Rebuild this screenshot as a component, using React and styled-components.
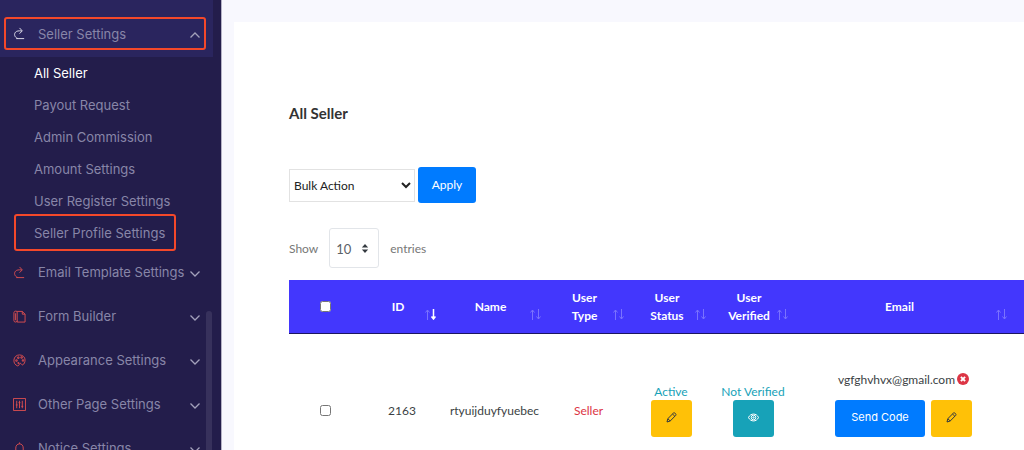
import React from "react";
import styled, { createGlobalStyle } from "styled-components";

const GlobalStyle = createGlobalStyle`
  * {
    box-sizing: border-box;
  }
  body {
    margin: 0;
    background: #f8f8fe;
    color: #3b3f44;
    font-family: Lato, sans-serif;
    font-size: 12px;
  }
`;

const settings = [
  { label: "Email Template Settings", icon: "reload" },
  { label: "Form Builder", icon: "files" },
  { label: "Appearance Settings", icon: "palette" },
  { label: "Other Page Settings", icon: "panel" },
  { label: "Notice Settings", icon: "bell" },
];

const sellerLinks = [
  { label: "All Seller", active: true },
  { label: "Payout Request" },
  { label: "Admin Commission" },
  { label: "Amount Settings" },
  { label: "User Register Settings" },
  { label: "Seller Profile Settings", marked: true },
];

const columns = [
  { label: "ID", width: 80, sorted: true },
  { label: "Name", width: 105 },
  { label: "User Type", width: 83 },
  { label: "User Status", width: 82 },
  { label: "User Verified", width: 82 },
  { label: "Email", width: 219 },
];

export default function App() {
  return (
    <Shell>
      <GlobalStyle />
      <Sidebar>
        <ActiveGroup>
          <GroupLink href="#seller" $marked>
            <MenuIcon name="reload" />
            <GroupLabel>Seller Settings</GroupLabel>
            <Chevron up />
          </GroupLink>
        </ActiveGroup>
        <SubMenu>
          {sellerLinks.map((item) => (
            <li key={item.label}>
              <SubLink href="#seller" $active={item.active} $marked={item.marked}>
                {item.label}
              </SubLink>
            </li>
          ))}
        </SubMenu>
        {settings.map((item) => (
          <GroupLink href="#settings" key={item.label}>
            <MenuIcon name={item.icon} />
            <GroupLabel>{item.label}</GroupLabel>
            <Chevron />
          </GroupLink>
        ))}
        <ScrollThumb />
      </Sidebar>

      <Main>
        <Card>
          <Title>All Seller</Title>
          <BulkForm>
            <BulkSelect aria-label="Bulk action">
              <option>Bulk Action</option>
            </BulkSelect>
            <Button type="button" $kind="apply">
              Apply
            </Button>
          </BulkForm>

          <Length>
            <span>Show</span>
            <LengthBox>
              <LengthSelect>
                <option>10</option>
              </LengthSelect>
              <Arrows viewBox="0 0 8 10">
                <path d="M4 0 7.5 4H.5zM4 10 .5 6h7z" />
              </Arrows>
            </LengthBox>
            <span>entries</span>
          </Length>

          <Table>
            <colgroup>
              <Col $width={73} />
              {columns.map((column) => (
                <Col key={column.label} $width={column.width} />
              ))}
              <Col $width={120} />
            </colgroup>
            <thead>
              <tr>
                <CheckHead>
                  <Check aria-label="Select all sellers" />
                </CheckHead>
                {columns.map((column) => (
                  <Head key={column.label}>
                    {column.label}
                    <SortIcon $sorted={column.sorted} viewBox="0 0 11 11">
                      <path d="M2.5 11V1M.5 3.5l2-2.500 2 2.500" />
                      <path d="M8.500 0v10M6.500 7.500l2 2.500 2-2.500" />
                    </SortIcon>
                  </Head>
                ))}
                <Head />
              </tr>
            </thead>
            <tbody>
              <tr>
                <Cell>
                  <Check aria-label="Select seller 2163" />
                </Cell>
                <Cell>2163</Cell>
                <Cell>rtyuijduyfyuebec</Cell>
                <Cell $color="#dc3545">Seller</Cell>
                <Cell $color="#17a2b8">
                  <Status>Active</Status>
                  <Button type="button" $kind="edit" aria-label="Edit status">
                    <Pencil />
                  </Button>
                </Cell>
                <Cell $color="#17a2b8">
                  <Status>Not Verified</Status>
                  <Button type="button" $kind="view" aria-label="View verification">
                    <Eye />
                  </Button>
                </Cell>
                <Cell>
                  <Email>
                    vgfghvhvx@gmail.com
                    <svg width="12" height="12" viewBox="0 0 11 11">
                      <circle cx="5.5" cy="5.5" r="5.500" fill="#dc3545" />
                      <path
                        d="M3.600 3.600l3.800 3.800M7.400 3.600L3.600 7.400"
                        stroke="#fff"
                        strokeWidth="1.800"
                      />
                    </svg>
                  </Email>
                  <Actions>
                    <Button type="button" $kind="send">
                      Send Code
                    </Button>
                    <Button type="button" $kind="edit" aria-label="Edit email">
                      <Pencil />
                    </Button>
                  </Actions>
                </Cell>
                <Cell />
              </tr>
            </tbody>
          </Table>
        </Card>
      </Main>
    </Shell>
  );
}

function MenuIcon({ name }) {
  return (
    <IconSvg viewBox="0 0 14 14" aria-hidden="true">
      {name === "reload" && (
        <path d="M3.500 12.500H12M5 12.300C1.500 11 .8 7.500 2.800 5.500 4 4.200 6 4 9.500 4.200M7 1l3 3.200-3 3" />
      )}
      {name === "files" && (
        <path d="M4.500 1.500h5.500l3 3v8.500h-8.500zM10 1.500v3h3M4.500 1.500C2 .8 1 1.500 1 3v8.500c0 2 3.500 2 3.500 0M2.800 3.500v7.500" />
      )}
      {name === "palette" && (
        <>
          <path d="M5 12.800C2 11.800.8 9.300 1 6.500 1.200 3.300 3.700 1 7 1c3.500 0 6 2.500 6 5.500 0 2.200-1 4.500-2.500 5.200-1.500.5-1.300-1.700-2.700-1.700-1.300 0-.8 2.800-2.800 2.800z" />
          <path d="M3 6.300h1.500v1.500H3zM5 3.200h1.500v1.500H5zM8.500 3h1.500v1.500H8.500zM10 6.200h1.500v1.500H10zM5.300 9.200h1v1h-1z" />
        </>
      )}
      {name === "panel" && (
        <path d="M.5.5h13v13H.5zM4 3v8M7 3v8M10 3v8M3 7.500h2M6 5h2M9 9h2" />
      )}
      {name === "bell" && (
        <path d="M2 11.500h10M3 11.500V6.500C3 4 4.500 2 7 2s4 2 4 4.500v5M7 .5V2M5.500 12c.3 1.500 2.700 1.500 3 0" />
      )}
    </IconSvg>
  );
}

function Chevron({ up }) {
  return (
    <ChevronSvg viewBox="0 0 10 6" aria-hidden="true">
      <path d={up ? "M.5 5.500L5 1l4.500 4.500" : "M.5.5L5 5 9.500.5"} />
    </ChevronSvg>
  );
}

function Pencil() {
  return (
    <ButtonIcon viewBox="0 0 11 11" aria-hidden="true">
      <path d="M1 10l.8-3.300L7.500 1c.8-.8 3.200 1 2.300 2.300L4.200 9zM1.800 6.700L4.200 9M6.500 2l2.400 2.300" />
    </ButtonIcon>
  );
}

function Eye() {
  return (
    <ButtonIcon viewBox="0 0 11 11" aria-hidden="true">
      <path d="M.5 5.500C2.500.9 8.500.9 10.500 5.500 8.500 10.100 2.500 10.100.5 5.500z" />
      <circle cx="5.500" cy="5.500" r="2.300" />
      <circle cx="5.500" cy="5.500" r=".7" />
    </ButtonIcon>
  );
}

const Shell = styled.div`
  display: flex;
  height: 100vh;
  overflow: hidden;
`;

const Sidebar = styled.nav`
  position: relative;
  flex: 0 0 222px;
  padding-right: 8px;
  overflow: hidden;
  background: #231d4b;
  border-right: 1px solid #b5b2c6;
  font-family: Inter, sans-serif;
  font-size: 13px;
`;

const ActiveGroup = styled.div`
  padding: 17px 7px 7px 4px;
  background: #2a255e;
  color: #fff;

  a {
    height: 33px;
    padding: 0 4px 0 7px;
    color: #e4e3ee;
  }
`;

const GroupLink = styled.a`
  display: flex;
  align-items: center;
  height: 44px;
  padding: 0 13px;
  color: #dc4f50;
  text-decoration: none;
  border: ${(props) => (props.$marked ? "2px solid #f4482a" : "none")};
  border-radius: 3px;
`;

const GroupLabel = styled.span`
  flex: 1;
  color: #8886a8;
  white-space: nowrap;
`;

const IconSvg = styled.svg`
  flex: none;
  width: 13px;
  height: 13px;
  margin-right: 12px;
  fill: none;
  stroke: currentColor;
`;

const ChevronSvg = styled.svg`
  flex: none;
  width: 10px;
  height: 6px;
  margin-top: 3px;
  fill: none;
  stroke: #a3a1bb;
  stroke-width: 1.3;
`;

const SubMenu = styled.ul`
  margin: 0;
  padding: 0 0 1px 34px;
  list-style: none;
`;

const SubLink = styled.a`
  position: relative;
  display: block;
  color: ${(props) => (props.$active ? "#fff" : "#8886a8")};
  line-height: 32px;
  text-decoration: none;

  &::after {
    content: "";
    display: ${(props) => (props.$marked ? "block" : "none")};
    position: absolute;
    inset: -3px 37px -2px -20px;
    border: 2px solid #f4482a;
    border-radius: 3px;
  }
`;

const ScrollThumb = styled.div`
  position: absolute;
  top: 311px;
  right: 9px;
  bottom: -4px;
  width: 6px;
  border-radius: 3px;
  background: #37315c;
`;

const Main = styled.main`
  flex: 1;
  min-width: 0;
  padding: 22px 0 0 12px;
`;

const Card = styled.section`
  height: 100%;
  padding: 81px 0 0 55px;
  overflow: hidden;
  background: #fff;
`;

const Title = styled.h1`
  margin: 0 0 44px;
  color: #333;
  font-size: 15px;
  font-weight: 700;
  line-height: 20px;
`;

const BulkForm = styled.form`
  display: flex;
  align-items: center;
  gap: 3px;
`;

const BulkSelect = styled.select`
  width: 126px;
  height: 33px;
  border: 1px solid #e2e2e2;
  border-radius: 0;
  background: #fff;
  color: #222;
  font: 12px Lato, sans-serif;
`;

const kinds = {
  apply: { width: 58, background: "#007bff", color: "#fff" },
  send: { width: 90, background: "#007bff", color: "#fff" },
  edit: { width: 41, background: "#ffc107", color: "#343a40" },
  view: { width: 41, background: "#17a2b8", color: "#fff" },
};

const Button = styled.button`
  display: inline-flex;
  align-items: center;
  justify-content: center;
  width: ${(props) => kinds[props.$kind].width}px;
  height: ${(props) => (props.$kind === "apply" ? 36 : 37)}px;
  padding: 0 0 2px;
  border: 0;
  border-radius: 3px;
  background: ${(props) => kinds[props.$kind].background};
  color: ${(props) => kinds[props.$kind].color};
  font-family: ${(props) => (props.$kind === "send" ? "Inter" : "Lato")}, sans-serif;
  font-size: ${(props) => (props.$kind === "send" ? 11 : 12)}px;
`;

const ButtonIcon = styled.svg`
  width: 11px;
  height: 11px;
  fill: none;
  stroke: currentColor;
`;

const Length = styled.label`
  display: flex;
  align-items: center;
  gap: 11px;
  margin: 25px 0 12px;
  color: #777;
`;

const LengthBox = styled.span`
  position: relative;
`;

const LengthSelect = styled.select`
  display: block;
  width: 50px;
  height: 40px;
  padding: 2px 6px 0;
  appearance: none;
  border: 1px solid #e2e5e9;
  border-radius: 3px;
  background: #fff;
  color: #5b6168;
  font: 13px Lato, sans-serif;
`;

const Arrows = styled.svg`
  position: absolute;
  top: 16px;
  right: 10px;
  width: 8px;
  height: 9px;
  fill: #343a40;
  pointer-events: none;
`;

const Table = styled.table`
  width: 844px;
  table-layout: fixed;
  border-collapse: separate;
  border-spacing: 0;
  text-align: center;
`;

const Col = styled.col`
  width: ${(props) => props.$width}px;
`;

const Head = styled.th`
  position: relative;
  height: 54px;
  padding: 0 23px 0 15px;
  border-bottom: 1px solid #1c1660;
  background: #4337fd;
  color: #fff;
  font-weight: 700;
  line-height: 18px;
`;

const CheckHead = styled(Head)`
  padding: 0;
`;

const SortIcon = styled.svg`
  position: absolute;
  right: 6px;
  bottom: 13px;
  width: 11px;
  height: 11px;
  fill: none;
  stroke: #7a72fe;

  path:last-child {
    stroke: ${(props) => (props.$sorted ? "#fff" : "#7a72fe")};
    stroke-width: ${(props) => (props.$sorted ? 1.5 : 1)};
  }
`;

const Cell = styled.td`
  height: 152px;
  padding: 0;
  color: ${(props) => props.$color || "#3b3f44"};
  line-height: 17px;
  vertical-align: middle;
`;

const Check = styled.input.attrs({ type: "checkbox" })`
  display: block;
  width: 11px;
  height: 11px;
  margin: 0 auto;
`;

const Status = styled.span`
  display: block;
`;

const Email = styled.div`
  display: flex;
  align-items: center;
  justify-content: center;
  gap: 2px;
  margin-bottom: 12px;
`;

const Actions = styled.div`
  display: flex;
  justify-content: center;
  gap: 6px;
  margin-bottom: 13px;
`;
